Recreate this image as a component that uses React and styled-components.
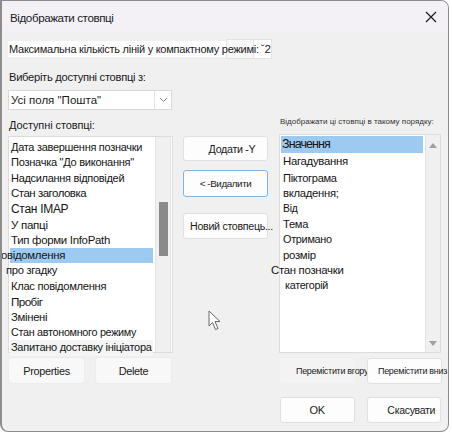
import React from "react";
import styled, { createGlobalStyle } from "styled-components";

const GlobalStyle = createGlobalStyle`
  html, body {
    margin: 0;
    padding: 0;
    background: #ffffff;
  }
  body {
    font-family: "Liberation Sans", Arial, sans-serif;
    color: #1a1a1a;
  }
`;

const leftItems = [
  { text: "Дата завершення позначки", size: 11 },
  { text: 'Позначка "До виконання"', size: 11.1 },
  { text: "Надсилання відповідей", size: 11 },
  { text: "Стан заголовка", size: 11.5, ls: -0.5 },
  { text: "Стан IMAP", size: 12 },
  { text: "У папці", size: 11.6 },
  { text: "Тип форми InfoPath", size: 11.45 },
  { text: "Повідомлення", size: 11.4, indent: -17, selected: true },
  { text: "про згадку", size: 11.2, indent: -4 },
  { text: "Клас повідомлення", size: 11.2 },
  { text: "Пробіг", size: 11.7, ls: -0.6 },
  { text: "Змінені", size: 11.3 },
  { text: "Стан автономного режиму", size: 10.8 },
  { text: "Запитано доставку ініціатора", size: 11.05, hover: true },
];

const rightItems = [
  { text: "Значення", size: 12.5, ls: -0.9, h: 17, selected: true },
  { text: "Нагадування", size: 11.4, h: 17, indent: 2 },
  { text: "Піктограма", size: 11.1, h: 16, indent: 2 },
  { text: "вкладення;", size: 11.3, h: 15, indent: 2 },
  { text: "Від", size: 10.4, h: 15, indent: 2 },
  { text: "Тема", size: 11.2, h: 16, indent: 2 },
  { text: "Отримано", size: 10.9, h: 15.5, indent: 2 },
  { text: "розмір", size: 11.4, h: 15.5, indent: 2 },
  { text: "Стан позначки", size: 11.4, h: 15, indent: -10 },
  { text: "категорій", size: 10.8, h: 15, indent: 4 },
];

export default function App() {
  return (
    <>
      <GlobalStyle />
      <Window>
        <TitleBar>
          <Title>Відображати стовпці</Title>
          <CloseButton aria-label="close">
            <svg width="12" height="12" viewBox="0 0 12 12">
              <path d="M1 1 L11 11 M11 1 L1 11" stroke="#1c1c1c" strokeWidth="1.2" />
            </svg>
          </CloseButton>
        </TitleBar>
        <Body>
          <CompactRow>
            <WhiteText>
              <span>Максимальна кількість ліній у компактному режимі:</span>
            </WhiteText>
            <Spinner>
              <SpinField />
              <SpinValue>ˇ2</SpinValue>
            </Spinner>
          </CompactRow>
          <FieldLabel>Виберіть доступні стовпці з:</FieldLabel>
          <Select>
            <SelectText>Усі поля "Пошта"</SelectText>
            <SelectArrow>
              <svg width="9" height="6" viewBox="0 0 9 6">
                <path d="M1 1 L4.5 4.5 L8 1" fill="none" stroke="#8a8a8a" strokeWidth="1" />
              </svg>
            </SelectArrow>
          </Select>
          <Columns>
            <Column>
              <ColumnLabel>Доступні стовпці:</ColumnLabel>
              <ListBox $h={217}>
                <Items $pt={3}>
                  {leftItems.map((it) => (
                    <Item
                      key={it.text}
                      $size={it.size}
                      $ls={it.ls ?? -0.3}
                      $h={15.43}
                      $indent={it.indent ?? 1}
                      $selected={it.selected}
                      $hover={it.hover}
                    >
                      {it.text}
                    </Item>
                  ))}
                </Items>
                <ScrollTrack>
                  <Thumb />
                </ScrollTrack>
              </ListBox>
              <ButtonRow $gap={12} $pl={1}>
                <FlatButton>Properties</FlatButton>
                <FlatButton>Delete</FlatButton>
              </ButtonRow>
            </Column>

            <Middle>
              <Button $h={25}>
                <ButtonText $size={10.7} $dx={13}>Додати -Y</ButtonText>
              </Button>
              <Button $h={27} $mt={9} $focused>
                <ButtonText $size={9.8} $ls={-0.4}>&lt; -Видалити</ButtonText>
              </Button>
              <Button $h={26} $mt={16}>
                <ButtonText $size={10.65} $dx={12}>Новий стовпець...</ButtonText>
              </Button>
              <Pointer width="16" height="21" viewBox="0 0 16 21">
                <path
                  d="M1 1 L1 16 L4.5 12.5 L7.5 19.5 L10 18.5 L7 11.5 L12 11.5 Z"
                  fill="#ffffff"
                  stroke="#6a6a6a"
                  strokeWidth="1"
                  strokeLinejoin="round"
                />
              </Pointer>
            </Middle>

            <Column>
              <SmallLabel>Відображати ці стовпці в такому порядку:</SmallLabel>
              <ListBox $h={219}>
                <Items $pt={1}>
                  {rightItems.map((it) => (
                    <Item
                      key={it.text}
                      $size={it.size}
                      $ls={it.ls ?? -0.3}
                      $h={it.h}
                      $indent={it.indent ?? 1}
                      $selected={it.selected}
                    >
                      {it.text}
                    </Item>
                  ))}
                </Items>
                <ArrowTrack>
                  <Arrow $up />
                  <Arrow />
                </ArrowTrack>
              </ListBox>
              <ButtonRow $gap={13} $pl={1}>
                <MoveButton $plain $pad={15}>Перемістити вгору</MoveButton>
                <MoveButton $pad={10}>Перемістити вниз</MoveButton>
              </ButtonRow>
              <ButtonRow $gap={12} $pl={1} $mt={13}>
                <Button $h={26} $w={75}>
                  <ButtonText $size={11}>OK</ButtonText>
                </Button>
                <Button $h={26} $w={75}>
                  <ButtonText $size={10.5} $dx={15}>Скасувати</ButtonText>
                </Button>
              </ButtonRow>
            </Column>
          </Columns>
        </Body>
      </Window>
    </>
  );
}

const Window = styled.div`
  width: 449px;
  height: 432px;
  box-sizing: border-box;
  border: 1px solid #8c8c8c;
  border-left: 2px solid #8c8c8c;
  border-radius: 0 8px 8px 8px;
  background: #f0f0f0;
  overflow: hidden;
  display: flex;
  flex-direction: column;
`;

const TitleBar = styled.div`
  height: 30px;
  flex: none;
  background: #f3f1f6;
  display: flex;
  align-items: center;
  justify-content: space-between;
  padding: 0 10px 0 8px;
`;

const Title = styled.div`
  font-size: 11.6px;
  letter-spacing: -0.4px;
  color: #1a1a1a;
  padding-top: 2px;
`;

const CloseButton = styled.div`
  width: 14px;
  height: 14px;
  display: flex;
  align-items: center;
  justify-content: center;
  padding-top: 2px;
`;

const Body = styled.div`
  padding: 8px 0 0 6px;
  display: flex;
  flex-direction: column;
`;

const CompactRow = styled.div`
  display: flex;
  align-items: center;
  height: 20px;
`;

const WhiteText = styled.div`
  position: relative;
  z-index: 1;
  background: #ffffff;
  font-size: 11px;
  letter-spacing: -0.25px;
  line-height: 16px;
  padding-left: 1px;
  width: 217px;
  white-space: nowrap;
  overflow: visible;
`;

const Spinner = styled.div`
  display: flex;
  height: 20px;
`;

const SpinField = styled.div`
  width: 26px;
  height: 18px;
  border: 1px solid #e2e2e2;
  background: #f7f7f7;
`;

const SpinValue = styled.div`
  width: 16px;
  height: 18px;
  padding-left: 1px;
  border: 1px solid #e2e2e2;
  border-left: none;
  background: #ffffff;
  font-size: 11.5px;
  line-height: 18px;
  white-space: nowrap;
  text-align: right;
`;

const FieldLabel = styled.div`
  margin-top: 10px;
  font-size: 11.2px;
  letter-spacing: -0.3px;
  line-height: 16px;
  padding-left: 1px;
`;

const Select = styled.div`
  margin-top: 5px;
  width: 164px;
  height: 20px;
  box-sizing: border-box;
  border: 1px solid #d9d9d9;
  background: #ffffff;
  display: flex;
  align-items: center;
`;

const SelectText = styled.div`
  flex: 1;
  font-size: 11.5px;
  padding-left: 2px;
`;

const SelectArrow = styled.div`
  width: 16px;
  height: 18px;
  border-left: 1px solid #e4e4e4;
  display: flex;
  align-items: center;
  justify-content: center;
`;

const Columns = styled.div`
  display: grid;
  grid-template-columns: 165px 85px 163px;
  column-gap: 10px;
`;

const Column = styled.div`
  display: flex;
  flex-direction: column;
  &:last-child {
    margin-left: 1px;
  }
`;

const ColumnLabel = styled.div`
  height: 26px;
  box-sizing: border-box;
  padding: 7px 0 0 1px;
  font-size: 11px;
  letter-spacing: -0.1px;
  line-height: 16px;
`;

const SmallLabel = styled.div`
  height: 24px;
  box-sizing: border-box;
  padding: 7px 0 0 1px;
  font-size: 8px;
  line-height: 10px;
  color: #333333;
  white-space: nowrap;
`;

const ListBox = styled.div`
  height: ${(p) => p.$h}px;
  box-sizing: border-box;
  border: 1px solid #dcdcdc;
  background: #ffffff;
  display: flex;
`;

const Items = styled.div`
  flex: 1;
  padding: ${(p) => p.$pt}px 0 0 1px;
  min-width: 0;
`;

const Item = styled.div`
  height: ${(p) => p.$h}px;
  line-height: ${(p) => p.$h}px;
  font-size: ${(p) => p.$size}px;
  letter-spacing: ${(p) => p.$ls}px;
  text-indent: ${(p) => p.$indent}px;
  white-space: nowrap;
  color: #141414;
  background: ${(p) => (p.$selected ? "#9dcaf0" : p.$hover ? "#f4f4f4" : "transparent")};
`;

const ScrollTrack = styled.div`
  width: 14px;
  margin: 0 1px 0 2px;
  background: #f0f0f0;
  border-left: 1px solid #e4e4e4;
  border-right: 1px solid #e4e4e4;
  display: flex;
  flex-direction: column;
  align-items: center;
  padding-top: 65px;
`;

const Thumb = styled.div`
  width: 9px;
  height: 54px;
  background: #8a8a8a;
`;

const ArrowTrack = styled.div`
  width: 14px;
  margin-left: 2px;
  background: #f0f0f0;
  border-left: 1px solid #e4e4e4;
  display: flex;
  flex-direction: column;
  align-items: center;
  justify-content: space-between;
  padding: 8px 0 6px;
`;

const Arrow = styled.div`
  width: 0;
  height: 0;
  border-left: 4px solid transparent;
  border-right: 4px solid transparent;
  ${(p) =>
    p.$up ? "border-bottom: 5px solid #a0a0a0;" : "border-top: 5px solid #a0a0a0;"}
`;

const ButtonRow = styled.div`
  display: flex;
  gap: ${(p) => p.$gap}px;
  padding-left: ${(p) => p.$pl}px;
  margin-top: ${(p) => p.$mt ?? 5}px;
`;

const FlatButton = styled.div`
  width: 75px;
  height: 25px;
  box-sizing: border-box;
  border-radius: 3px;
  background: #f8f8f8;
  box-shadow: 0 0 0 1px #ececec;
  display: flex;
  align-items: center;
  justify-content: center;
  font-size: 10.9px;
  letter-spacing: -0.3px;
  white-space: nowrap;
  padding-top: 1px;
`;

const MoveButton = styled.div`
  width: ${(p) => (p.$plain ? 74 : 75)}px;
  height: ${(p) => (p.$plain ? 25 : 26)}px;
  box-sizing: border-box;
  border-radius: 3px;
  background: ${(p) => (p.$plain ? "#f3f3f3" : "#fdfdfd")};
  border: 1px solid ${(p) => (p.$plain ? "transparent" : "#e0e0e0")};
  display: flex;
  align-items: center;
  padding-left: ${(p) => p.$pad}px;
  font-size: 9px;
  letter-spacing: -0.3px;
  white-space: nowrap;
  overflow: visible;
`;

const Middle = styled.div`
  position: relative;
  padding-top: 26px;
  display: flex;
  flex-direction: column;
`;

const Button = styled.div`
  width: ${(p) => p.$w ?? 85}px;
  height: ${(p) => p.$h}px;
  margin-top: ${(p) => p.$mt ?? 0}px;
  box-sizing: border-box;
  border: 1px solid ${(p) => (p.$focused ? "#7fb4e6" : "#e0e0e0")};
  border-radius: 3px;
  background: #fdfdfd;
  display: flex;
  align-items: center;
  justify-content: center;
`;

const ButtonText = styled.span`
  font-size: ${(p) => p.$size ?? 12}px;
  letter-spacing: ${(p) => p.$ls ?? -0.3}px;
  margin-left: ${(p) => p.$dx ?? 0}px;
  white-space: nowrap;
`;

const Pointer = styled.svg`
  position: absolute;
  left: 25px;
  top: 200px;
`;
